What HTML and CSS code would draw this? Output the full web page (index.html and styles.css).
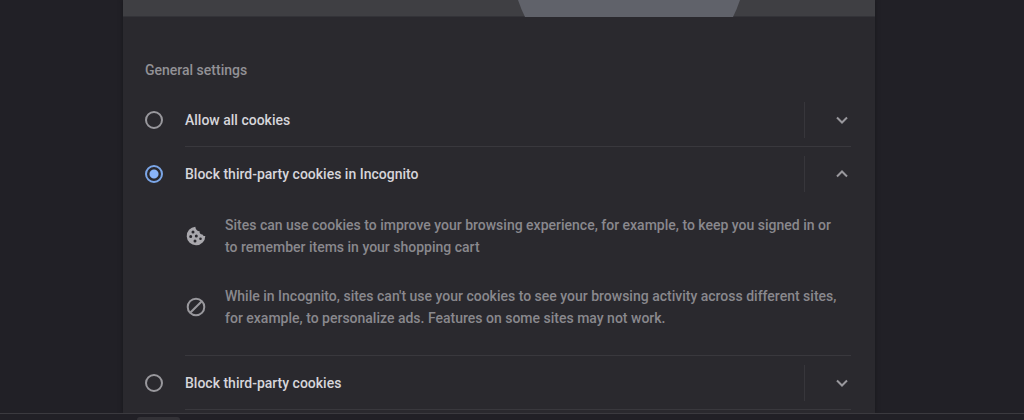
FILE: index.html
```html
<!DOCTYPE html>
<html lang="en">
<head>
<meta charset="utf-8">
<title>Cookies and other site data</title>
<link rel="stylesheet" href="styles.css">
</head>
<body>
<main class="card">
  <div class="banner">
    <svg class="banner-art" viewBox="0 0 222 17" aria-hidden="true"><path d="M0 0H222Q219 9 215 17H7Q3 9 0 0Z"/></svg>
  </div>
  <form class="settings">
    <h2 class="title">General settings</h2>

    <section class="option">
      <div class="row">
        <input class="radio" type="radio" name="cookies" id="allow">
        <label class="name" for="allow">Allow all cookies</label>
        <button class="toggle" type="button" aria-label="Show details" aria-expanded="false">
          <svg class="chevron" viewBox="0 0 12 8" aria-hidden="true"><path d="M1 1.5 6 6.5 11 1.5"/></svg>
        </button>
      </div>
    </section>

    <section class="option">
      <div class="row">
        <input class="radio" type="radio" name="cookies" id="incognito" checked>
        <label class="name" for="incognito">Block third-party cookies in Incognito</label>
        <button class="toggle" type="button" aria-label="Hide details" aria-expanded="true">
          <svg class="chevron" viewBox="0 0 12 8" aria-hidden="true"><path d="M1 6.5 6 1.5 11 6.5"/></svg>
        </button>
      </div>
      <ul class="details">
        <li class="detail">
          <svg class="icon" viewBox="0 0 20 20" aria-hidden="true">
            <path class="solid" fill-rule="evenodd" d="M9.3.7A9.3 9.3 0 1 0 19.3 10C18.3 10.3 17 9.9 16.6 8.5C14.7 8.7 13.2 7.4 13.6 5.3C11.3 5.3 9.4 3.3 9.3.7ZM7 4.4a1.5 1.5 0 1 1 0 3a1.5 1.5 0 1 1 0-3ZM4.7 9a1.5 1.5 0 1 1 0 3a1.5 1.5 0 1 1 0-3ZM10.3 8.5a1.5 1.5 0 1 1 0 3a1.5 1.5 0 1 1 0-3ZM9 13.5a1.5 1.5 0 1 1 0 3a1.5 1.5 0 1 1 0-3ZM14.5 11.5a1.3 1.3 0 1 1 0 2.6a1.3 1.3 0 1 1 0-2.6Z"/>
          </svg>
          <p class="text">Sites can use cookies to improve your browsing experience, for example, to keep you signed in or to remember items in your shopping cart</p>
        </li>
        <li class="detail">
          <svg class="icon" viewBox="0 0 20 20" aria-hidden="true"><circle class="line" cx="10" cy="10" r="8.3"/><path class="line" d="M4.2 15.8 15.8 4.2"/></svg>
          <p class="text">While in Incognito, sites can't use your cookies to see your browsing activity across different sites, for example, to personalize ads. Features on some sites may not work.</p>
        </li>
      </ul>
    </section>

    <section class="option">
      <div class="row">
        <input class="radio" type="radio" name="cookies" id="block">
        <label class="name" for="block">Block third-party cookies</label>
        <button class="toggle" type="button" aria-label="Show details" aria-expanded="false">
          <svg class="chevron" viewBox="0 0 12 8" aria-hidden="true"><path d="M1 1.5 6 6.5 11 1.5"/></svg>
        </button>
      </div>
    </section>
  </form>
</main>
<footer class="shelf"><div class="shelf-item"></div></footer>
</body>
</html>
```
FILE: styles.css
```css
* {
  box-sizing: border-box;
}

body {
  margin: 0;
  min-height: 100vh;
  display: flex;
  flex-direction: column;
  background: #212026;
  color: #d6d5da;
  font: 500 14px/22px Roboto, "Liberation Sans", sans-serif;
}

.card {
  flex: 1;
  margin: 0 149px 0 123px;
  background: #2a292e;
  box-shadow: 0 0 4px #17161b;
}

.banner {
  height: 17px;
  padding-left: 395px;
  border-bottom: 1px solid #333338;
  background: #3f3f43;
}

.banner-art {
  display: block;
  width: 222px;
  height: 17px;
  margin-bottom: -1px;
  fill: #60626a;
}

.settings {
  padding: 42px 24px 3px 22px;
}

.title {
  margin: 0 0 12px;
  color: #929196;
  font-size: 14px;
  font-weight: 500;
}

.option {
  border-bottom: 1px solid #39383d;
  margin-left: 40px;
}

.row {
  display: flex;
  align-items: center;
  height: 53px;
  margin-left: -40px;
}

.radio {
  appearance: none;
  flex: none;
  width: 18px;
  height: 18px;
  margin: 0 22px 0 0;
  border: 2px solid #99989d;
  border-radius: 50%;
}

.radio:checked {
  border-color: #7ba6e8;
  background: radial-gradient(circle, #8ab4f8 4px, transparent 5px);
}

.name {
  flex: 1;
}

.toggle {
  display: flex;
  align-items: center;
  justify-content: center;
  width: 47px;
  height: 36px;
  padding: 0 0 0 28px;
  border: 0;
  border-left: 1px solid #37363b;
  background: none;
}

.chevron {
  flex: none;
  width: 12px;
  height: 8px;
  fill: none;
  stroke: #99989d;
  stroke-width: 2;
}

.details {
  display: grid;
  gap: 27px;
  margin: 0;
  padding: 14px 10px 26px 0;
  list-style: none;
}

.detail {
  display: flex;
  align-items: center;
  gap: 18px;
}

.icon {
  flex: none;
  width: 22px;
  height: 20px;
}

.solid {
  fill: #a9a8ad;
}

.line {
  fill: none;
  stroke: #99989d;
  stroke-width: 2;
}

.text {
  margin: 0;
  color: #89888d;
}

.shelf {
  height: 7px;
  padding: 3px 0 0 137px;
  border-top: 1px solid #3b3a3f;
  background: #212026;
  z-index: 1;
}

.shelf-item {
  width: 43px;
  height: 3px;
  border-radius: 3px 3px 0 0;
  background: #333237;
}
```
